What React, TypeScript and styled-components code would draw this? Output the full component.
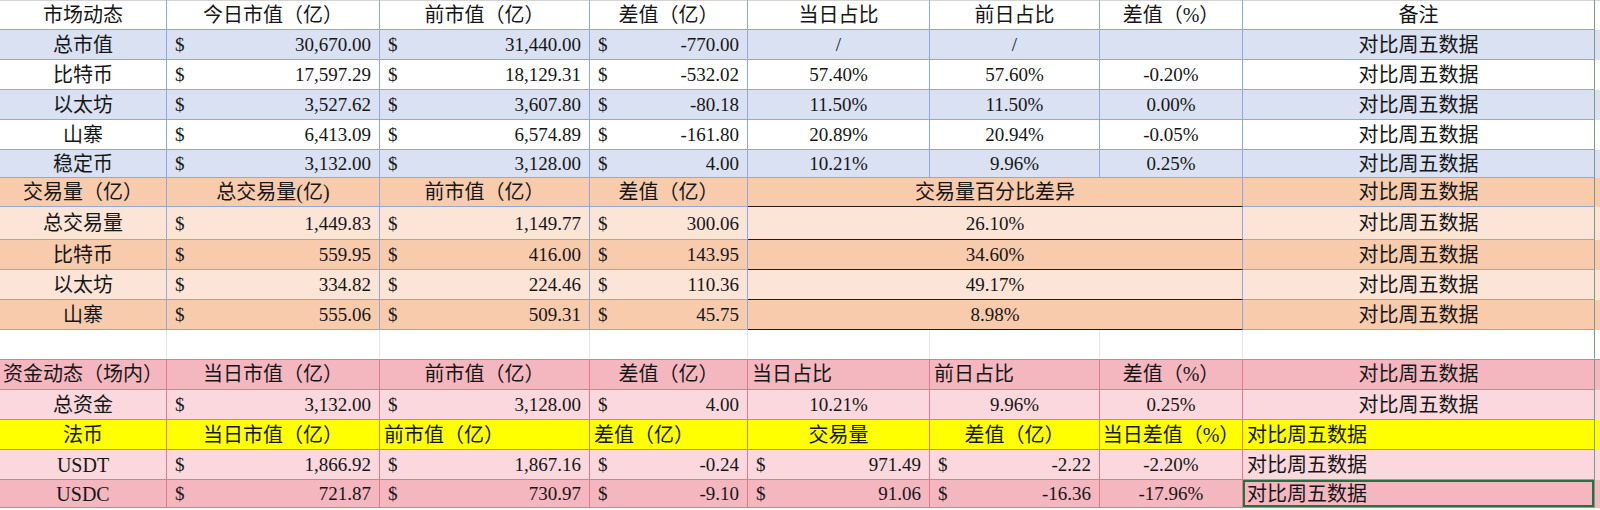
import React from "react";
import styled, { createGlobalStyle, css } from "styled-components";

const COLUMNS = "167px 213px 210px 158px 182px 170px 143px 352px";

const palette = {
    white: "#ffffff",
    blue: "#d9e1f2",
    orange: "#f8cbad",
    orangeLight: "#fce4d6",
    pink: "#f4b7c0",
    pinkLight: "#fad8dd",
    yellow: "#ffff00",
    blueLine: "#8ea9db",
    pinkLine: "#e27a8e",
    blankLine: "#e6e6e6",
    blackLine: "#1e1e1e",
    text: "#161616",
    green: "#217346",
    edge: "#7d9a88",
};

const GlobalStyle = createGlobalStyle`
    html, body {
        margin: 0;
        padding: 0;
        background: #ffffff;
    }
`;

const Sheet = styled.div`
    width: 1600px;
    height: 510px;
    overflow: hidden;
    background: #ffffff;
    color: ${palette.text};
    font-family: "Liberation Serif", "Noto Sans CJK SC", serif;
`;

const Row = styled.div<{ $bg: string; $h: number; $top?: string }>`
    display: grid;
    grid-template-columns: ${COLUMNS};
    height: ${(p) => p.$h}px;
    background: ${(p) => p.$bg};
    ${(p) =>
        p.$top &&
        css`
            box-shadow: inset 0 1px 0 ${p.$top};
        `}
`;

const Cell = styled.div<{
    $line: string;
    $bottom?: string;
    $align?: "left" | "center";
    $span?: number;
    $last?: boolean;
    $selected?: boolean;
}>`
    box-sizing: border-box;
    display: flex;
    align-items: center;
    justify-content: ${(p) => (p.$align === "left" ? "flex-start" : "center")};
    padding: 0 ${(p) => (p.$align === "left" ? "4px" : "0")};
    border-right: 1px solid ${(p) => (p.$last ? palette.edge : p.$line)};
    border-bottom: 1px solid ${(p) => p.$bottom ?? p.$line};
    grid-column: span ${(p) => p.$span ?? 1};
    font-size: 20px;
    line-height: 1;
    white-space: nowrap;
    ${(p) =>
        p.$selected &&
        css`
            box-shadow: inset 0 0 0 2px ${palette.green};
        `}
`;

const NumberCell = styled(Cell)`
    font-size: 19px;
`;

const MoneyCell = styled(NumberCell)`
    justify-content: space-between;
    padding: 0 8px;
`;

type Align = "left" | "center";

const Money: React.FC<{ value: string; line: string; bottom?: string }> = ({ value, line, bottom }) => (
    <MoneyCell $line={line} $bottom={bottom}>
        <span>$</span>
        <span>{value}</span>
    </MoneyCell>
);

const marketRows = [
    ["总市值", "30,670.00", "31,440.00", "-770.00", "/", "/", ""],
    ["比特币", "17,597.29", "18,129.31", "-532.02", "57.40%", "57.60%", "-0.20%"],
    ["以太坊", "3,527.62", "3,607.80", "-80.18", "11.50%", "11.50%", "0.00%"],
    ["山寨", "6,413.09", "6,574.89", "-161.80", "20.89%", "20.94%", "-0.05%"],
    ["稳定币", "3,132.00", "3,128.00", "4.00", "10.21%", "9.96%", "0.25%"],
];

const volumeRows = [
    ["总交易量", "1,449.83", "1,149.77", "300.06", "26.10%"],
    ["比特币", "559.95", "416.00", "143.95", "34.60%"],
    ["以太坊", "334.82", "224.46", "110.36", "49.17%"],
    ["山寨", "555.06", "509.31", "45.75", "8.98%"],
];

const stableRows = [
    { name: "USDT", now: "1,866.92", prev: "1,867.16", diff: "-0.24", volume: "971.49", volDiff: "-2.22", pct: "-2.20%" },
    { name: "USDC", now: "721.87", prev: "730.97", diff: "-9.10", volume: "91.06", volDiff: "-16.36", pct: "-17.96%" },
];

const REMARK = "对比周五数据";

const HeaderCells: React.FC<{ labels: [string, Align?][]; line: string }> = ({ labels, line }) => (
    <>
        {labels.map(([label, align], i) => (
            <Cell key={i} $line={line} $align={align} $last={i === labels.length - 1}>
                {label}
            </Cell>
        ))}
    </>
);

export default function App() {
    const B = palette.blueLine;
    const P = palette.pinkLine;

    return (
        <Sheet>
            <GlobalStyle />

            {/* 市场动态 */}
            <Row $bg={palette.white} $h={30} $top="#d4d4d4">
                <HeaderCells
                    line={B}
                    labels={[
                        ["市场动态"],
                        ["今日市值（亿）"],
                        ["前市值（亿）"],
                        ["差值（亿）"],
                        ["当日占比"],
                        ["前日占比"],
                        ["差值（%）"],
                        ["备注"],
                    ]}
                />
            </Row>
            {marketRows.map((r, i) => (
                <Row key={r[0]} $bg={i % 2 === 0 ? palette.blue : palette.white} $h={i === 4 ? 28 : 30}>
                    <Cell $line={B}>{r[0]}</Cell>
                    <Money line={B} value={r[1]} />
                    <Money line={B} value={r[2]} />
                    <Money line={B} value={r[3]} />
                    <NumberCell $line={B}>{r[4]}</NumberCell>
                    <NumberCell $line={B}>{r[5]}</NumberCell>
                    <NumberCell $line={B}>{r[6]}</NumberCell>
                    <Cell $line={B} $last>
                        {REMARK}
                    </Cell>
                </Row>
            ))}

            {/* 交易量 */}
            <Row $bg={palette.orange} $h={29}>
                <Cell $line={B}>交易量（亿）</Cell>
                <Cell $line={B}>总交易量(亿)</Cell>
                <Cell $line={B}>前市值（亿）</Cell>
                <Cell $line={B}>差值（亿）</Cell>
                <Cell $line={B} $bottom={palette.blackLine} $span={3}>
                    交易量百分比差异
                </Cell>
                <Cell $line={B} $last>
                    {REMARK}
                </Cell>
            </Row>
            {volumeRows.map((r, i) => (
                <Row key={r[0] + i} $bg={i % 2 === 0 ? palette.orangeLight : palette.orange} $h={i === 0 ? 33 : 30}>
                    <Cell $line={B}>{r[0]}</Cell>
                    <Money line={B} value={r[1]} />
                    <Money line={B} value={r[2]} />
                    <Money line={B} value={r[3]} />
                    <NumberCell $line={B} $bottom={palette.blackLine} $span={3}>
                        {r[4]}
                    </NumberCell>
                    <Cell $line={B} $last>
                        {REMARK}
                    </Cell>
                </Row>
            ))}

            {/* blank spreadsheet row */}
            <Row $bg={palette.white} $h={29}>
                {Array.from({ length: 8 }).map((_, i) => (
                    <Cell key={i} $line={palette.blankLine} $bottom="transparent" $last={i === 7} />
                ))}
            </Row>

            {/* 资金动态 */}
            <Row $bg={palette.pink} $h={31} $top={P}>
                <HeaderCells
                    line={P}
                    labels={[
                        ["资金动态（场内）"],
                        ["当日市值（亿）"],
                        ["前市值（亿）"],
                        ["差值（亿）"],
                        ["当日占比", "left"],
                        ["前日占比", "left"],
                        ["差值（%）"],
                        [REMARK],
                    ]}
                />
            </Row>
            <Row $bg={palette.pinkLight} $h={30}>
                <Cell $line={P}>总资金</Cell>
                <Money line={P} value="3,132.00" />
                <Money line={P} value="3,128.00" />
                <Money line={P} value="4.00" />
                <NumberCell $line={P}>10.21%</NumberCell>
                <NumberCell $line={P}>9.96%</NumberCell>
                <NumberCell $line={P}>0.25%</NumberCell>
                <Cell $line={P} $last>
                    {REMARK}
                </Cell>
            </Row>
            <Row $bg={palette.yellow} $h={30}>
                <HeaderCells
                    line={P}
                    labels={[
                        ["法币"],
                        ["当日市值（亿）"],
                        ["前市值（亿）", "left"],
                        ["差值（亿）", "left"],
                        ["交易量"],
                        ["差值（亿）"],
                        ["当日差值（%）"],
                        [REMARK, "left"],
                    ]}
                />
            </Row>
            {stableRows.map((r, i) => (
                <Row key={r.name} $bg={i === 0 ? palette.pinkLight : palette.pink} $h={i === 0 ? 30 : 28}>
                    <NumberCell $line={P} style={{ fontSize: 20 }}>
                        {r.name}
                    </NumberCell>
                    <Money line={P} value={r.now} />
                    <Money line={P} value={r.prev} />
                    <Money line={P} value={r.diff} />
                    <Money line={P} value={r.volume} />
                    <Money line={P} value={r.volDiff} />
                    <NumberCell $line={P}>{r.pct}</NumberCell>
                    <Cell $line={P} $align="left" $last $selected={i === 1}>
                        {REMARK}
                    </Cell>
                </Row>
            ))}
        </Sheet>
    );
}
